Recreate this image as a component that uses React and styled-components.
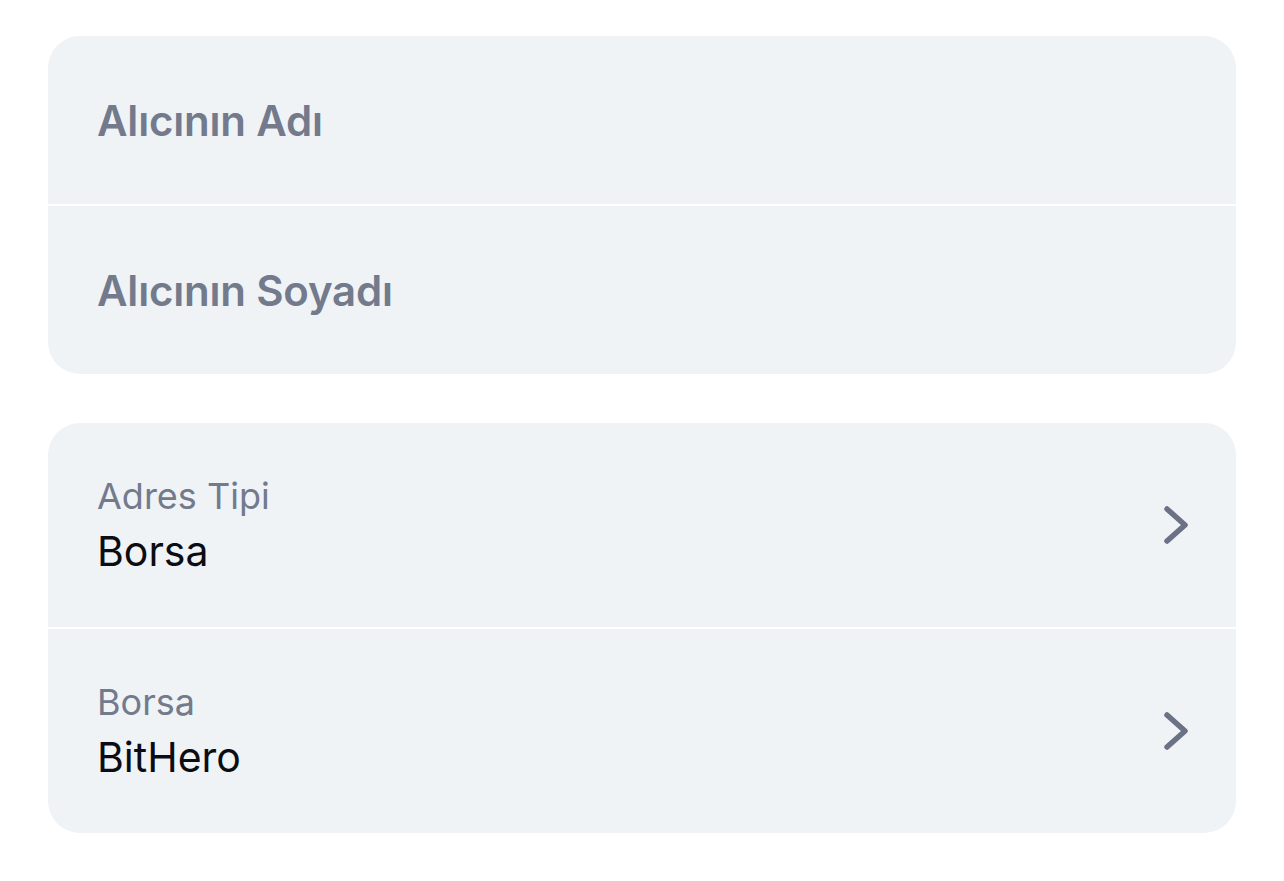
import React from 'react';
import styled, { createGlobalStyle } from 'styled-components';

const GlobalStyle = createGlobalStyle`
    html, body {
        margin: 0;
        padding: 0;
        background: #fff;
        font-family: Inter, "Noto Sans", sans-serif;
    }
`;

const Page = styled.div`
    display: flex;
    flex-direction: column;
    gap: 49px;
    padding: 36px 48px 0 48px;
`;

const Card = styled.div`
    display: flex;
    flex-direction: column;
    gap: 2px;
    border-radius: 32px;
    overflow: hidden;
`;

const Row = styled.div`
    display: flex;
    align-items: center;
    justify-content: space-between;
    height: ${props => props.height}px;
    padding: 0 44px 0 49px;
    background: #eff3f6;
    box-sizing: border-box;
`;

const Placeholder = styled.div`
    font-size: 42px;
    font-weight: 600;
    color: #737a8c;
    letter-spacing: -0.2px;
`;

const Field = styled.div`
    display: flex;
    flex-direction: column;
    gap: 8px;
`;

const Label = styled.div`
    font-size: 36px;
    color: #737a8c;
    line-height: 44px;
`;

const Value = styled.div`
    font-size: 41px;
    color: #0b0d12;
    line-height: 50px;
`;

const Chevron = () => (
    <svg width="30" height="40" viewBox="0 0 30 40" fill="none">
        <path d="M5 4 L23 20 L5 36" stroke="#6b7286" strokeWidth="5.5" strokeLinecap="round" strokeLinejoin="round" />
    </svg>
);

const SelectRow = ({ label, value, height }) => (
    <Row height={height}>
        <Field>
            <Label>{label}</Label>
            <Value>{value}</Value>
        </Field>
        <Chevron />
    </Row>
);

export default function App() {
    return (
        <>
            <GlobalStyle />
            <Page>
                <Card>
                    <Row height={168}><Placeholder>Alıcının Adı</Placeholder></Row>
                    <Row height={168}><Placeholder>Alıcının Soyadı</Placeholder></Row>
                </Card>
                <Card>
                    <SelectRow label="Adres Tipi" value="Borsa" height={204} />
                    <SelectRow label="Borsa" value="BitHero" height={204} />
                </Card>
            </Page>
        </>
    );
}
